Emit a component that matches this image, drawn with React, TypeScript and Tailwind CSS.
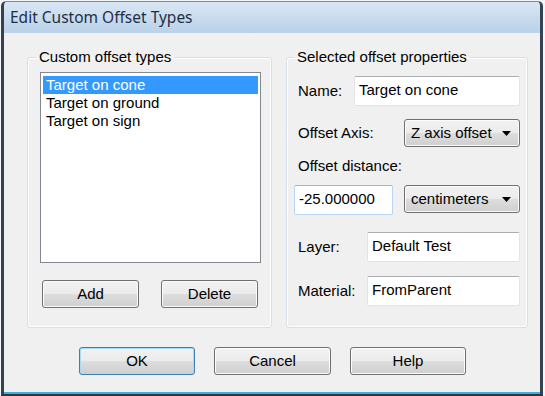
import React from 'react'

const ui = { fontFamily: '"Liberation Sans", Arial, sans-serif' }

function PushButton({
  label,
  width,
  primary = false,
}: {
  label: string
  width: string
  primary?: boolean
}) {
  return (
    <div
      className={`${width} flex h-[28px] items-center justify-center rounded-[3px] border text-[15px] text-black ${
        primary
          ? 'border-[#3c7fb1] shadow-[inset_0_0_0_1px_#a6dcf4]'
          : 'border-[#707070] shadow-[inset_0_0_0_1px_#fbfbfb]'
      } bg-[linear-gradient(#f2f2f2_0%,#ebebeb_50%,#dddddd_51%,#cfcfcf_100%)]`}
    >
      {label}
    </div>
  )
}

function DropDown({ value }: { value: string }) {
  return (
    <div className="flex h-[28px] w-[116px] items-center justify-between rounded-[3px] border border-[#707070] bg-[linear-gradient(#f2f2f2_0%,#ebebeb_50%,#dddddd_51%,#cfcfcf_100%)] pl-[6px] pr-[8px] text-[15px] text-black shadow-[inset_0_0_0_1px_#fbfbfb]">
      <span>{value}</span>
      <svg width="9" height="5" viewBox="0 0 9 5">
        <path d="M0 0h9L4.5 5z" fill="#000" />
      </svg>
    </div>
  )
}

function TextBox({
  value,
  width,
  focused = false,
}: {
  value: string
  width: string
  focused?: boolean
}) {
  return (
    <div
      className={`${width} flex h-[30px] items-start rounded-[2px] border bg-white pl-[4px] pt-[4px] text-[15px] leading-[17px] text-black ${
        focused
          ? 'border-[#b8d6f0] border-t-[#8fbbe6]'
          : 'border-[#e2e3ea] border-t-[#abadb3]'
      }`}
    >
      {value}
    </div>
  )
}

const items = ['Target on cone', 'Target on ground', 'Target on sign']

export default function App() {
  return (
    <div className="h-[396px] w-[545px] bg-[#f4f6f8] pl-[1px] pt-[1px]" style={ui}>
      <div className="flex h-[395px] w-[542px] flex-col overflow-hidden rounded-t-[5px] border-x-[3px] border-b-[2px] border-t border-x-[#34434f] border-b-[#2a3640] border-t-[#7d8d9a] bg-[#1e2a33]">
        {/* title bar */}
        <div className="flex h-[31px] shrink-0 items-center bg-[linear-gradient(#d9e7f4,#b9d1e9)] pl-[6px]">
          <span
            className="text-[15.5px] text-[#1e2f44]"
            style={{ fontFamily: '"Noto Sans", "Open Sans", sans-serif' }}
          >
            Edit Custom Offset Types
          </span>
        </div>

        {/* client area */}
        <div className="flex flex-1 flex-col border-b-[2px] border-[#3fb2da] bg-[#f0f0f0] pl-[23px] pt-[15px]">
          <div className="flex gap-[14px]">
            {/* left group */}
            <fieldset className="h-[280px] w-[245px] rounded-[3px] border border-[#d5dfe5] pl-[12px] shadow-[inset_0_0_0_1px_#ffffff]">
              <legend className="-ml-[4px] px-[3px] text-[15px] leading-[18px] text-black">
                Custom offset types
              </legend>
              <div className="mt-[6px] h-[191px] w-[221px] border border-[#828790] bg-white px-[2px] pt-[3px]">
                {items.map((item, i) => (
                  <div
                    key={item}
                    className={`h-[18px] pl-[3px] text-[15px] leading-[18px] ${
                      i === 0 ? 'bg-[#3399ff] text-white' : 'text-black'
                    }`}
                  >
                    {item}
                  </div>
                ))}
              </div>
              <div className="mt-[17px] flex gap-[22px] pl-[2px]">
                <PushButton label="Add" width="w-[97px]" />
                <PushButton label="Delete" width="w-[97px]" />
              </div>
            </fieldset>

            {/* right group */}
            <fieldset className="h-[280px] w-[242px] rounded-[3px] border border-[#d5dfe5] pl-[11px] pr-[7px] shadow-[inset_0_0_0_1px_#ffffff]">
              <legend className="-ml-[4px] px-[3px] text-[15px] leading-[18px] text-black">
                Selected offset properties
              </legend>
              <div className="mt-[10px] flex items-center justify-between">
                <span className="text-[15px] text-black">Name:</span>
                <TextBox value="Target on cone" width="w-[166px]" />
              </div>
              <div className="mt-[13px] flex items-center justify-between">
                <span className="text-[15px] text-black">Offset Axis:</span>
                <DropDown value="Z axis offset" />
              </div>
              <div className="mt-[10px] h-[18px] text-[15px] leading-[18px] text-black">
                Offset distance:
              </div>
              <div className="mt-[10px] flex items-start justify-between">
                <div className="-ml-[4px]">
                  <TextBox value="-25.000000" width="w-[99px]" focused />
                </div>
                <DropDown value="centimeters" />
              </div>
              <div className="mt-[17px] flex items-center justify-between">
                <span className="text-[15px] text-black">Layer:</span>
                <TextBox value="Default Test" width="w-[153px]" />
              </div>
              <div className="mt-[14px] flex items-center justify-between">
                <span className="text-[15px] text-black">Material:</span>
                <TextBox value="FromParent" width="w-[153px]" />
              </div>
            </fieldset>
          </div>

          {/* dialog buttons */}
          <div className="mt-[19px] flex gap-[19px] pl-[52px]">
            <PushButton label="OK" width="w-[116px]" primary />
            <PushButton label="Cancel" width="w-[117px]" />
            <PushButton label="Help" width="w-[116px]" />
          </div>
        </div>
      </div>
    </div>
  )
}
